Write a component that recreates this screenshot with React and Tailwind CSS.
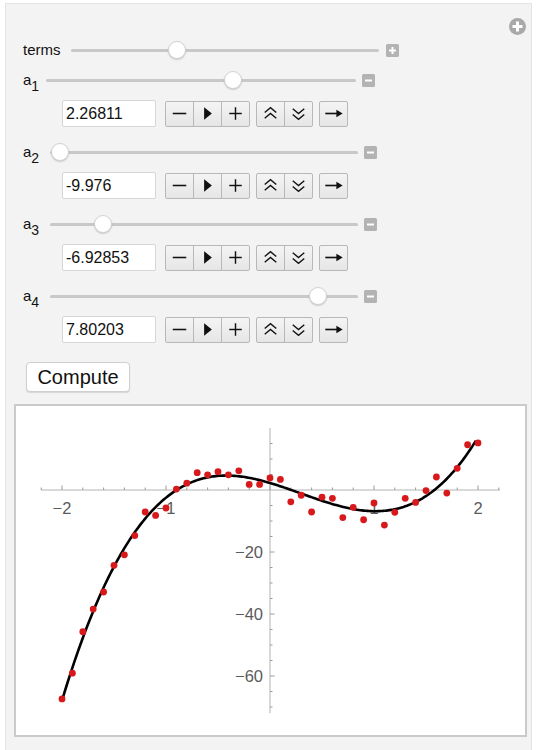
import React from 'react'

// Fitted coefficients shown in the controls
const COEFFS = [2.26811, -9.976, -6.92853, 7.80203]
const fit = (x) => COEFFS[0] + COEFFS[1] * x + COEFFS[2] * x * x + COEFFS[3] * x * x * x

// page-space mapping for the plot
const X = (x) => 270 + 104 * x
const Y = (v) => 490 - 3.1 * v

const DATA = [
  -67.4, -59.1, -45.7, -38.4, -32.9, -24.3, -20.9, -14.7, -7.1, -8.2, -5.8,
  0.3, 2.2, 5.6, 4.9, 5.9, 4.9, 6.2, 1.8, 1.8, 3.9, 3.4, -3.8, -1.7, -7.1,
  -2.3, -2.7, -8.9, -5.6, -9.6, -4.2, -11.3, -7.2, -2.7, -4.0, -0.2, 4.2,
  -1.0, 7.0, 14.6, 15.2,
].map((v, i) => [-2 + i * 0.1, v])

const FONT = { fontFamily: '"Liberation Sans", Arial, sans-serif' }

function Slider({ className, thumb }) {
  return (
    <div className={`relative h-5 ${className}`}>
      <div className="absolute left-0 right-0 top-[9px] h-[3px] rounded-full bg-[#c8c8c8]" />
      <div
        className="absolute top-[1px] w-[18px] h-[18px] -translate-x-1/2 rounded-full bg-white border border-[#d2d2d2] shadow-[0_1px_1.5px_rgba(0,0,0,0.18)]"
        style={{ left: thumb }}
      />
    </div>
  )
}

function SquareIcon({ plus }) {
  return (
    <svg width="13" height="13" viewBox="0 0 13 13" className="shrink-0">
      <rect x="0" y="0" width="13" height="13" rx="1.5" fill="#b3b3b3" />
      <rect x="3" y="5.5" width="7" height="2" fill="#fff" />
      {plus && <rect x="5.5" y="3" width="2" height="7" fill="#fff" />}
    </svg>
  )
}

function SubLabel({ n, className }) {
  return (
    <div className={`relative h-5 text-[15px] text-[#111] leading-5 ${className}`}>
      <span>a</span>
      <span className="relative top-[6px] text-[14px]">{n}</span>
    </div>
  )
}

const Glyph = {
  minus: (
    <svg width="28" height="25" viewBox="0 0 28 25">
      <line x1="7" y1="12.5" x2="21" y2="12.5" stroke="#111" strokeWidth="1.6" />
    </svg>
  ),
  play: (
    <svg width="28" height="25" viewBox="0 0 28 25">
      <polygon points="10.5,6 18.5,12.5 10.5,19" fill="#111" />
    </svg>
  ),
  plus: (
    <svg width="28" height="25" viewBox="0 0 28 25">
      <line x1="7.5" y1="12.5" x2="20.5" y2="12.5" stroke="#111" strokeWidth="1.5" />
      <line x1="14" y1="6" x2="14" y2="19" stroke="#111" strokeWidth="1.5" />
    </svg>
  ),
  up: (
    <svg width="28" height="25" viewBox="0 0 28 25">
      <polyline points="8,11.5 14,6.5 20,11.5" fill="none" stroke="#111" strokeWidth="1.4" />
      <polyline points="8,17.5 14,12.5 20,17.5" fill="none" stroke="#111" strokeWidth="1.4" />
    </svg>
  ),
  down: (
    <svg width="28" height="25" viewBox="0 0 28 25">
      <polyline points="8,7.5 14,12.5 20,7.5" fill="none" stroke="#111" strokeWidth="1.4" />
      <polyline points="8,13.5 14,18.5 20,13.5" fill="none" stroke="#111" strokeWidth="1.4" />
    </svg>
  ),
  arrow: (
    <svg width="28" height="25" viewBox="0 0 28 25">
      <line x1="5.5" y1="12.5" x2="19" y2="12.5" stroke="#111" strokeWidth="1.7" />
      <polygon points="17,8.5 23.5,12.5 17,16.5" fill="#111" />
    </svg>
  ),
}

function BtnGroup({ items }) {
  return (
    <div className="flex rounded-[2px] border border-[#b8b8b8] bg-gradient-to-b from-[#f4f4f4] to-[#e6e6e6]">
      {items.map((k, i) => (
        <div
          key={k}
          className={`flex items-center justify-center h-[24px] w-[27px] ${i > 0 ? 'border-l border-[#b8b8b8] w-[28px]' : ''}`}
        >
          {Glyph[k]}
        </div>
      ))}
    </div>
  )
}

function Controls({ value, className }) {
  return (
    <div className={`flex items-center pl-[17px] ${className}`}>
      <div className="ml-[39px] w-[94px] h-[27px] bg-white border border-[#d6d6d6] rounded-[2px] flex items-center pl-[3px] text-[16px] text-[#111]">
        {value}
      </div>
      <div className="ml-[9px]">
        <BtnGroup items={['minus', 'play', 'plus']} />
      </div>
      <div className="ml-[6px]">
        <BtnGroup items={['up', 'down']} />
      </div>
      <div className="ml-[6px]">
        <BtnGroup items={['arrow']} />
      </div>
    </div>
  )
}

function ParamBlock({ n, value, thumb, labelW, trackW }) {
  return (
    <>
      <div className="flex items-center pl-[17px] mt-[15px]">
        <SubLabel n={n} className={labelW} />
        <Slider className={trackW} thumb={thumb} />
        <div className="ml-[6px]">
          <SquareIcon />
        </div>
      </div>
      <Controls value={value} className="mt-[10px]" />
    </>
  )
}

function Plot() {
  const curve = []
  for (let i = 0; i <= 240; i++) {
    const x = -2 + (3.98 * i) / 240
    curve.push(`${i ? 'L' : 'M'}${X(x).toFixed(2)},${Y(fit(x)).toFixed(2)}`)
  }
  const xTicks = []
  for (let i = -11; i <= 11; i++) {
    const x = i * 0.2
    const major = i % 5 === 0
    xTicks.push(<line key={i} x1={X(x)} x2={X(x)} y1={490} y2={major ? 485.5 : 487.5} stroke="#9a9a9a" strokeWidth="1" />)
  }
  const yTicks = []
  for (let v = 15; v >= -70; v -= 5) {
    if (v === 0) continue
    const major = v % 20 === 0
    yTicks.push(<line key={v} x1={270} x2={major ? 274.5 : 272.5} y1={Y(v)} y2={Y(v)} stroke="#9a9a9a" strokeWidth="1" />)
  }
  return (
    <div className="ml-[8px] mt-[12px] w-[513px] h-[333px] bg-white border-2 border-[#cacaca]">
      <svg width="509" height="329" viewBox="16 406 509 329" className="block">
        <line x1={41} x2={500} y1={490} y2={490} stroke="#b3b3b3" strokeWidth="1" />
        <line x1={270} x2={270} y1={Y(20)} y2={Y(-72)} stroke="#b3b3b3" strokeWidth="1" />
        {xTicks}
        {yTicks}
        <g fill="#5b5b5b" fontSize="16.5" style={FONT}>
          <text x={X(-2)} y={514} textAnchor="middle">−2</text>
          <text x={X(-1)} y={514} textAnchor="middle">−1</text>
          <text x={X(1)} y={514} textAnchor="middle">1</text>
          <text x={X(2)} y={514} textAnchor="middle">2</text>
          <text x={263} y={Y(-20) + 6} textAnchor="end">−20</text>
          <text x={263} y={Y(-40) + 6} textAnchor="end">−40</text>
          <text x={263} y={Y(-60) + 6} textAnchor="end">−60</text>
        </g>
        <path d={curve.join('')} fill="none" stroke="#000" strokeWidth="2.6" strokeLinejoin="round" />
        {DATA.map(([x, v], i) => (
          <circle key={i} cx={X(x)} cy={Y(v)} r="3.4" fill="#d8191c" />
        ))}
      </svg>
    </div>
  )
}

export default function App() {
  return (
    <div className="w-[540px] h-[750px] bg-white overflow-hidden" style={FONT}>
      <div className="ml-[5px] mt-[3px] w-[527px] h-[747px] bg-[#f3f3f3] border border-[#e4e4e4] border-b-0">
        <div className="flex justify-end pt-[14px] pr-[5px]">
          <svg width="17" height="17" viewBox="0 0 17 17">
            <circle cx="8.5" cy="8.5" r="8.5" fill="#a9a9a9" />
            <rect x="3.5" y="7" width="10" height="3" fill="#fff" />
            <rect x="7" y="3.5" width="3" height="10" fill="#fff" />
          </svg>
        </div>

        <div className="flex items-center pl-[17px] mt-[5px]">
          <div className="w-[48px] h-5 leading-5 text-[15px] text-[#111]">terms</div>
          <Slider className="w-[308px]" thumb={106} />
          <div className="ml-[7px]">
            <SquareIcon plus />
          </div>
        </div>

        <div className="flex items-center pl-[17px] mt-[10px]">
          <SubLabel n="1" className="w-[23px]" />
          <Slider className="w-[310px]" thumb={187} />
          <div className="ml-[6px]">
            <SquareIcon />
          </div>
        </div>
        <Controls value="2.26811" className="mt-[10px]" />

        <ParamBlock n="2" value="-9.976" thumb={10} labelW="w-[27px]" trackW="w-[308px]" />
        <ParamBlock n="3" value="-6.92853" thumb={53} labelW="w-[27px]" trackW="w-[308px]" />
        <ParamBlock n="4" value="7.80203" thumb={268} labelW="w-[27px]" trackW="w-[308px]" />

        <div className="pl-[20px] mt-[19px]">
          <button
            type="button"
            className="w-[104px] h-[30px] bg-white border border-[#cfcfcf] rounded-[4px] shadow-[0_1px_1px_rgba(0,0,0,0.12)] text-[20px] text-[#111] leading-none"
            style={FONT}
          >
            Compute
          </button>
        </div>

        <Plot />
      </div>
    </div>
  )
}
